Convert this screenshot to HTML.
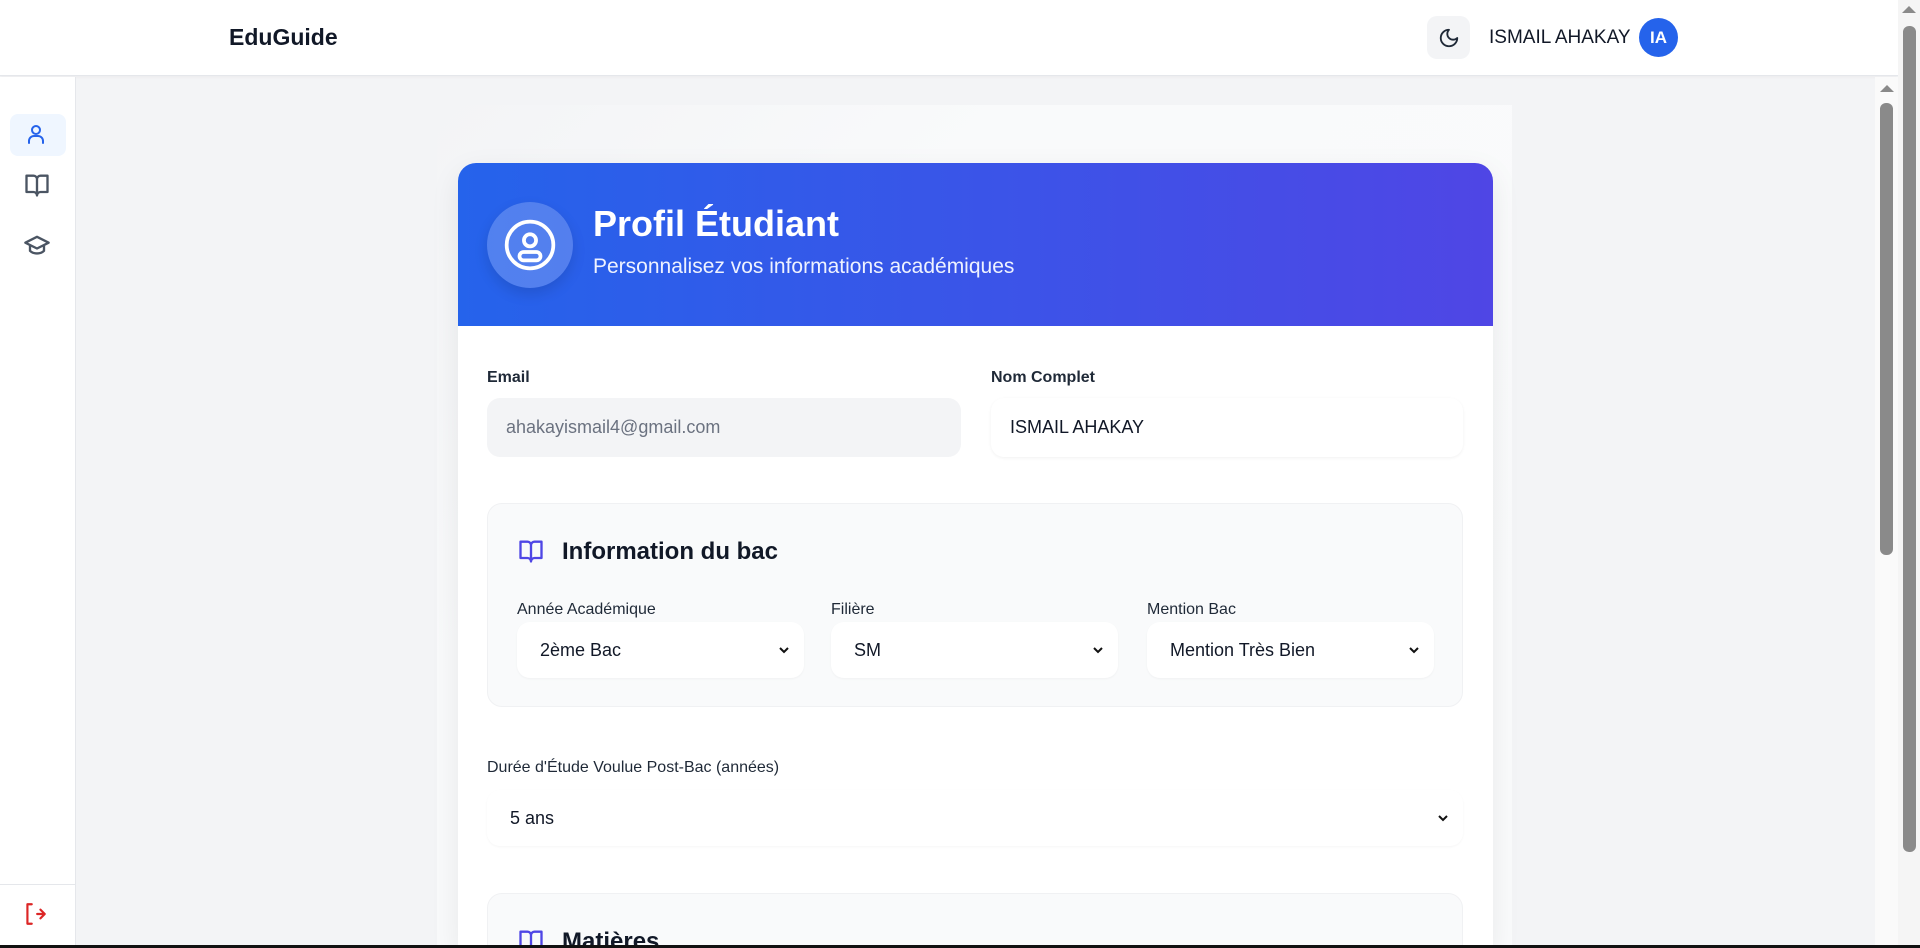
<!DOCTYPE html>
<html><head><meta charset="utf-8"><style>
*{box-sizing:border-box;margin:0;padding:0}
html,body{width:1920px;height:948px;overflow:hidden}
body{background:#f3f4f6;font-family:"Liberation Sans",sans-serif;color:#111827;position:relative}
.hdr{position:absolute;left:0;top:0;width:1898px;height:76px;background:#fff;border-bottom:1px solid #e5e7eb;box-shadow:0 1px 3px rgba(0,0,0,.04)}
.logo{position:absolute;left:229px;top:24px;font-size:23px;font-weight:700;color:#111827}
.moon{position:absolute;left:1427px;top:16px;width:43px;height:43px;border-radius:10px;background:#f3f4f6;display:flex;align-items:center;justify-content:center}
.uname{position:absolute;left:1489px;top:27px;font-size:19px;color:#111827;font-weight:500}
.av{position:absolute;left:1639px;top:18px;width:39px;height:39px;border-radius:50%;background:#2563eb;color:#fff;font-weight:700;font-size:17px;display:flex;align-items:center;justify-content:center}
.side{position:absolute;left:0;top:77px;width:76px;height:871px;background:#fff;border-right:1px solid #e5e7eb}
.act{position:absolute;left:10px;top:37px;width:56px;height:42px;border-radius:8px;background:#eff6ff}
.ic{position:absolute;left:23px}
.lo{position:absolute;left:0;top:807px;width:75px;border-top:1px solid #e5e7eb;height:64px}
.sb1{position:absolute;left:1898px;top:0;width:22px;height:948px;background:#f5f5f5}
.sb2{position:absolute;left:1875px;top:77px;width:23px;height:871px;background:#fafafa}
.thumb{position:absolute;background:#8a8a8a;border-radius:6px}
.cont{position:absolute;left:437px;top:105px;width:1075px;height:843px;background:linear-gradient(135deg,#f3f4f6,#f9fafb 30%,#fafbfc)}
.card{position:absolute;left:458px;top:163px;width:1035px;height:785px;background:#fff;border-radius:18px 18px 0 0;box-shadow:0 10px 30px rgba(0,0,0,.08);overflow:hidden}
.ch{height:163px;background:linear-gradient(90deg,#2563eb,#4f46e5);position:relative}
.cav{position:absolute;left:29px;top:39px;width:86px;height:86px;border-radius:50%;background:rgba(255,255,255,.2);box-shadow:0 6px 14px rgba(0,0,0,.12);display:flex;align-items:center;justify-content:center}
.tt{position:absolute;left:135px;top:40px;color:#fff;font-size:36px;font-weight:700}
.st{position:absolute;left:135px;top:92px;color:#eef2ff;font-size:21px}
.lbl{position:absolute;font-size:16px;font-weight:600;color:#1f2937}
.inp{position:absolute;height:59px;border-radius:13px;font-size:18px;padding-left:19px;display:flex;align-items:center}
.sec{position:absolute;left:29px;width:976px;background:#f9fafb;border:1px solid #f0f1f3;border-radius:15px}
.sel{position:absolute;height:56px;background:#fff;border-radius:13px;font-size:18px;padding-left:23px;display:flex;align-items:center;box-shadow:0 1px 2px rgba(0,0,0,.04)}
.chev{position:absolute;right:14px;top:22px}
.h3{position:absolute;left:74px;font-size:24px;font-weight:600;color:#111827}
</style></head><body>
<div class="hdr">
<div class="logo">EduGuide</div>
<div class="moon"><svg width="22" height="22" viewBox="0 0 24 24" fill="none" stroke="#1f2937" stroke-width="2" stroke-linecap="round" stroke-linejoin="round"><path d="M12 3a6 6 0 0 0 9 9 9 9 0 1 1-9-9Z"/></svg></div>
<div class="uname">ISMAIL AHAKAY</div>
<div class="av">IA</div>
</div>
<div class="side">
<div class="act"></div>
<svg class="ic" style="top:45px;left:24px" width="24" height="24" viewBox="0 0 24 24" fill="none" stroke="#2563eb" stroke-width="2" stroke-linecap="round"><circle cx="12" cy="8" r="4"/><path d="M5 21v-2a5 5 0 0 1 5-5h4a5 5 0 0 1 5 5v2"/></svg>
<svg class="ic" style="top:94px" width="28" height="28" viewBox="0 0 24 24" fill="none" stroke="#4b5563" stroke-width="2" stroke-linejoin="round"><path d="M12 7v14M3 18V4h6a3 3 0 0 1 3 3 3 3 0 0 1 3-3h6v14h-6a3 3 0 0 0-3 3 3 3 0 0 0-3-3Z"/></svg>
<svg class="ic" style="top:154px" width="28" height="28" viewBox="0 0 24 24" fill="none" stroke="#4b5563" stroke-width="2" stroke-linejoin="round"><path d="M22 10 12 5 2 10l10 5 10-5Z"/><path d="M6 12v5c3 3 9 3 12 0v-5"/></svg>
<div class="lo"><svg style="position:absolute;left:22px;top:16px" width="26" height="26" viewBox="0 0 24 24" fill="none" stroke="#dc2626" stroke-width="2" stroke-linecap="round" stroke-linejoin="round"><path d="M9 3H5v18h4M14 12h7M17 8l4 4-4 4"/></svg></div>
</div>
<div class="sb2"><div style="position:absolute;left:5px;top:8px;width:0;height:0;border-left:7px solid transparent;border-right:7px solid transparent;border-bottom:7px solid #8a8a8a"></div><div class="thumb" style="left:5px;top:26px;width:13px;height:452px"></div></div>
<div class="sb1"><div style="position:absolute;left:4px;top:6px;width:0;height:0;border-left:7px solid transparent;border-right:7px solid transparent;border-bottom:7px solid #8a8a8a"></div><div class="thumb" style="left:5px;top:26px;width:13px;height:826px"></div></div>
<div class="cont"></div>
<div class="card">
<div class="ch">
<div class="cav"><svg width="56" height="56" viewBox="0 0 24 24" fill="none" stroke="#fff" stroke-width="1.6"><circle cx="12" cy="12" r="10"/><circle cx="12" cy="10" r="2.6"/><rect x="7.5" y="15" width="9" height="3.6" rx="1.8"/></svg></div>
<div class="tt">Profil Étudiant</div>
<div class="st">Personnalisez vos informations académiques</div>
</div>
<div class="lbl" style="left:29px;top:206px">Email</div>
<div class="inp" style="left:29px;top:235px;width:474px;background:#f3f4f6;color:#6b7280">ahakayismail4@gmail.com</div>
<div class="lbl" style="left:533px;top:206px">Nom Complet</div>
<div class="inp" style="left:533px;top:235px;width:472px;background:#fff;color:#111827;box-shadow:0 1px 3px rgba(0,0,0,.06)">ISMAIL AHAKAY</div>
<div class="sec" style="top:340px;height:204px">
<svg style="position:absolute;left:29px;top:33px" width="28" height="28" viewBox="0 0 24 24" fill="none" stroke="#4f46e5" stroke-width="2" stroke-linejoin="round"><path d="M12 7v14M3 18V4h6a3 3 0 0 1 3 3 3 3 0 0 1 3-3h6v14h-6a3 3 0 0 0-3 3 3 3 0 0 0-3-3Z"/></svg>
<div class="h3" style="top:34px">Information du bac</div>
<div class="lbl" style="left:29px;top:97px;font-weight:500">Année Académique</div>
<div class="lbl" style="left:343px;top:97px;font-weight:500">Filière</div>
<div class="lbl" style="left:659px;top:97px;font-weight:500">Mention Bac</div>
<div class="sel" style="left:29px;top:118px;width:287px">2ème Bac<svg class="chev" width="12" height="12" viewBox="0 0 12 12" fill="none" stroke="#111" stroke-width="2"><path d="M2 4l4 4 4-4"/></svg></div>
<div class="sel" style="left:343px;top:118px;width:287px">SM<svg class="chev" width="12" height="12" viewBox="0 0 12 12" fill="none" stroke="#111" stroke-width="2"><path d="M2 4l4 4 4-4"/></svg></div>
<div class="sel" style="left:659px;top:118px;width:287px">Mention Très Bien<svg class="chev" width="12" height="12" viewBox="0 0 12 12" fill="none" stroke="#111" stroke-width="2"><path d="M2 4l4 4 4-4"/></svg></div>
</div>
<div class="lbl" style="left:29px;top:596px;font-weight:500">Durée d'Étude Voulue Post-Bac (années)</div>
<div class="sel" style="left:29px;top:627px;width:976px">5 ans<svg class="chev" width="12" height="12" viewBox="0 0 12 12" fill="none" stroke="#111" stroke-width="2"><path d="M2 4l4 4 4-4"/></svg></div>
<div class="sec" style="top:730px;height:120px">
<svg style="position:absolute;left:29px;top:33px" width="28" height="28" viewBox="0 0 24 24" fill="none" stroke="#4f46e5" stroke-width="2" stroke-linejoin="round"><path d="M12 7v14M3 18V4h6a3 3 0 0 1 3 3 3 3 0 0 1 3-3h6v14h-6a3 3 0 0 0-3 3 3 3 0 0 0-3-3Z"/></svg>
<div class="h3" style="top:34px">Matières</div>
</div>
</div>
<div style="position:absolute;left:0;top:945px;width:1920px;height:3px;background:#111"></div>
</body></html>
